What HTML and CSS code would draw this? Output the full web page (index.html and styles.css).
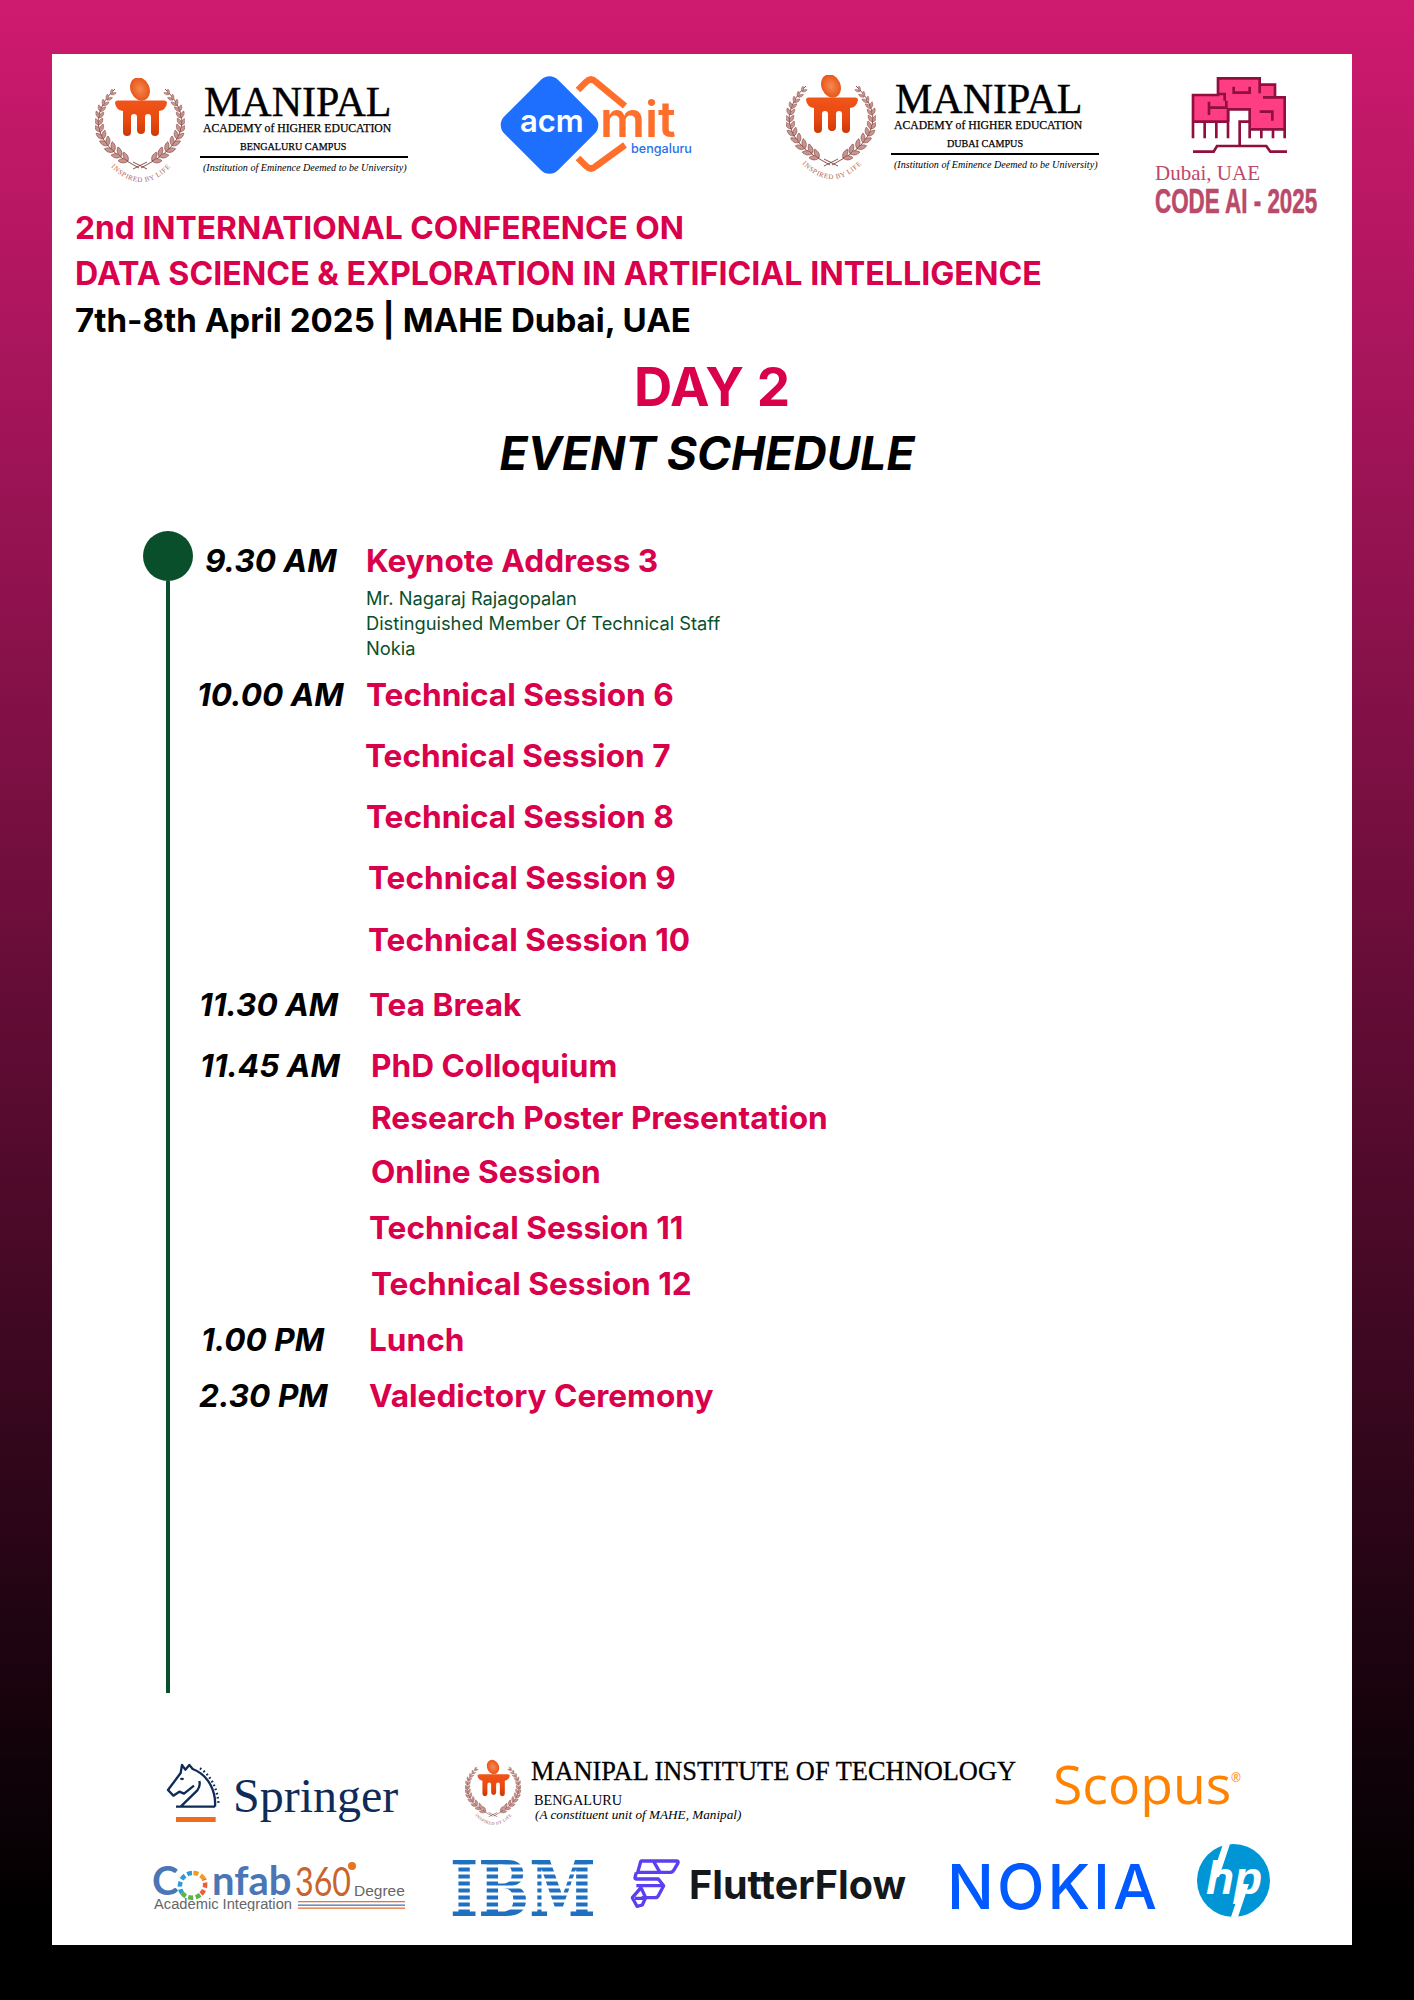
FILE: index.html
```html
<!DOCTYPE html>
<html lang="en">
<head>
<meta charset="utf-8">
<title>CODE AI 2025 - Day 2 Event Schedule</title>
<link rel="stylesheet" href="styles.css">
</head>
<body>
<svg class="defs" aria-hidden="true">
  <defs>
    <linearGradient id="capGrad" x1="0" y1="0" x2="0" y2="1">
      <stop offset="0" stop-color="#f0551a"/>
      <stop offset="0.6" stop-color="#e8480f"/>
      <stop offset="1" stop-color="#c93a06"/>
    </linearGradient>
    <radialGradient id="flameGrad">
      <stop offset="0" stop-color="#f58a52"/>
      <stop offset="1" stop-color="#e8561a"/>
    </radialGradient>
    <path id="lf" d="M0 0C3-3 7-2.600 10 0C7 2.600 3 3 0 0Z" fill="#c8958f" stroke="#7e3f3a" stroke-width=".6"/>
    <g id="branch">
      <path d="M62 97L48 104M54 103L40 95C26 86 15 75 13 58C13 46 20 33 30 24" fill="none" stroke="#7e3f3a" stroke-width=".9"/>
      <use href="#lf" transform="translate(43 96) rotate(-178)"/>
      <use href="#lf" transform="translate(43 96) rotate(-118)"/>
      <use href="#lf" transform="translate(36 91.500) rotate(-172)"/>
      <use href="#lf" transform="translate(36 91.500) rotate(-108)"/>
      <use href="#lf" transform="translate(29 86.500) rotate(-164)"/>
      <use href="#lf" transform="translate(29 86.500) rotate(-100)"/>
      <use href="#lf" transform="translate(23 80.500) rotate(-152) scale(.95)"/>
      <use href="#lf" transform="translate(23 80.500) rotate(-90) scale(.95)"/>
      <use href="#lf" transform="translate(18 74) rotate(-140) scale(.9)"/>
      <use href="#lf" transform="translate(18 74) rotate(-78) scale(.9)"/>
      <use href="#lf" transform="translate(15 67) rotate(-130) scale(.85)"/>
      <use href="#lf" transform="translate(15 67) rotate(-68) scale(.85)"/>
      <use href="#lf" transform="translate(13.500 60) rotate(-122) scale(.8)"/>
      <use href="#lf" transform="translate(13.500 60) rotate(-58) scale(.8)"/>
      <use href="#lf" transform="translate(14 53) rotate(-112) scale(.75)"/>
      <use href="#lf" transform="translate(14 53) rotate(-50) scale(.75)"/>
      <use href="#lf" transform="translate(15.500 46.500) rotate(-104) scale(.7)"/>
      <use href="#lf" transform="translate(15.500 46.500) rotate(-42) scale(.7)"/>
      <use href="#lf" transform="translate(18.500 40.500) rotate(-94) scale(.65)"/>
      <use href="#lf" transform="translate(18.500 40.500) rotate(-32) scale(.65)"/>
      <use href="#lf" transform="translate(22 35) rotate(-86) scale(.6)"/>
      <use href="#lf" transform="translate(22 35) rotate(-24) scale(.6)"/>
      <use href="#lf" transform="translate(26 29.500) rotate(-78) scale(.55)"/>
      <use href="#lf" transform="translate(26 29.500) rotate(-18) scale(.55)"/>
    </g>
    <path id="arc" d="M20 95Q56 139 92 95"/>
    <symbol id="emblem" viewBox="10 13 90 104">
      <use href="#branch"/>
      <use href="#branch" transform="matrix(-1 0 0 1 110 0)"/>
      <ellipse cx="55" cy="24" rx="9.500" ry="12" transform="rotate(-24 55 24)" fill="url(#flameGrad)"/>
      <path fill="url(#capGrad)" d="M30 38Q30 35.500 33 35.500H79Q82 35.500 82 38Q81 45 74 46V67a4 4 0 0 1-8 0V52Q66 49 63 49Q60 49 60 52V65a4 4 0 0 1-8 0V52Q52 49 49 49Q46 49 46 52V67a4 4 0 0 1-8 0V46Q31 45 30 38Z"/>
      <text class="em-motto"><textPath href="#arc" startOffset="50%" text-anchor="middle">INSPIRED BY LIFE</textPath></text>
    </symbol>
  </defs>
</svg>

<main class="panel">
  <header class="header">
    <div class="mahe mahe-a">
      <svg class="emblem"><use href="#emblem"/></svg>
      <div class="mahe-text">
        <div class="mahe-name">MANIPAL</div>
        <div class="mahe-acad">ACADEMY of HIGHER EDUCATION</div>
        <div class="mahe-campus">BENGALURU CAMPUS</div>
        <div class="mahe-note">(Institution of Eminence Deemed to be University)</div>
      </div>
    </div>

    <svg class="acm" viewBox="0 0 200 110" role="img" aria-label="ACM MIT Bengaluru">
      <rect x="14.500" y="17" width="76" height="76" rx="12" transform="rotate(45 52.500 55)" fill="#1f6fff"/>
      <text class="acm-t" x="23" y="62">acm</text>
      <path d="M81 20L89 12Q94 7 99 12L128 36" fill="none" stroke="#ff6f2c" stroke-width="6.500"/>
      <path d="M81 88L89 96Q94 101 99 96L128 75" fill="none" stroke="#ff6f2c" stroke-width="6.500"/>
      <text class="mit-t" x="103" y="67">mit</text>
      <text class="blr-t" x="134" y="83">bengaluru</text>
    </svg>

    <div class="mahe mahe-b">
      <svg class="emblem"><use href="#emblem"/></svg>
      <div class="mahe-text">
        <div class="mahe-name">MANIPAL</div>
        <div class="mahe-acad">ACADEMY of HIGHER EDUCATION</div>
        <div class="mahe-campus mahe-campus-b">DUBAI CAMPUS</div>
        <div class="mahe-note">(Institution of Eminence Deemed to be University)</div>
      </div>
    </div>

    <div class="code">
      <svg class="tree" viewBox="0 0 345 270" aria-hidden="true">
        <path d="M105 25H230V44H276V82H305V178H200V118H140V155H30V75H105Z" fill="#ff3d82"/>
        <path d="M30 205V75H105V25H230V44H276V82H305V205M65 155V205M100 155V205M135 155V205M30 155H135V118H200V205M235 178V205M270 178V205M200 178H305M152 50V68H200V50M78 95V135M78 113H130V92M105 72H125V92M230 44V70M276 82H240M230 125H268V152M170 232V155H200M30 245H92L102 228H250L262 245H312" fill="none" stroke="#8f0f3e" stroke-width="8"/>
      </svg>
      <div class="code-place">Dubai, UAE</div>
      <div class="code-name">CODE AI - 2025</div>
    </div>
  </header>

  <section class="titles">
    <h1 class="conf">2nd INTERNATIONAL CONFERENCE ON</h1>
    <h1 class="conf conf-long">DATA SCIENCE &amp; EXPLORATION IN ARTIFICIAL INTELLIGENCE</h1>
    <p class="when">7th-8th April 2025 | MAHE Dubai, UAE</p>
    <h2 class="day">DAY 2</h2>
    <h2 class="event">EVENT SCHEDULE</h2>
  </section>

  <section class="schedule">
    <div class="axis"><span class="axis-dot"></span><span class="axis-line"></span></div>
    <div class="rows">
      <div class="row"><span class="time t-930">9.30 AM</span><span class="item">Keynote Address 3</span></div>
      <div class="speaker">
        <div>Mr. Nagaraj Rajagopalan</div>
        <div>Distinguished Member Of Technical Staff</div>
        <div>Nokia</div>
      </div>
      <div class="row g14"><span class="time t-1000">10.00 AM</span><span class="item">Technical Session 6</span></div>
      <div class="row g21"><span class="time"></span><span class="item n-1">Technical Session 7</span></div>
      <div class="row g21"><span class="time"></span><span class="item">Technical Session 8</span></div>
      <div class="row g21"><span class="time"></span><span class="item n2">Technical Session 9</span></div>
      <div class="row g22"><span class="time"></span><span class="item n2">Technical Session 10</span></div>
      <div class="row g25"><span class="time t-1130">11.30 AM</span><span class="item n3">Tea Break</span></div>
      <div class="row g21"><span class="time t-1145">11.45 AM</span><span class="item n4">PhD Colloquium</span></div>
      <div class="row g12"><span class="time"></span><span class="item n4">Research Poster Presentation</span></div>
      <div class="row g14"><span class="time"></span><span class="item n4">Online Session</span></div>
      <div class="row g16"><span class="time"></span><span class="item n3">Technical Session 11</span></div>
      <div class="row g16"><span class="time"></span><span class="item n4">Technical Session 12</span></div>
      <div class="row g16"><span class="time t-100">1.00 PM</span><span class="item n3">Lunch</span></div>
      <div class="row g16"><span class="time t-230">2.30 PM</span><span class="item n3">Valedictory Ceremony</span></div>
    </div>
  </section>

  <footer class="sponsors">
    <div class="sp-row sp-row-a">
      <div class="springer">
        <svg class="knight" viewBox="0 0 195 210" aria-hidden="true">
          <path d="M62 155L112 106Q122 92 118 78M48 155H165M165 155C168 115 150 62 98 42L88 30L76 44L66 30L62 54L24 105L40 122L58 110L72 116L102 92" fill="none" stroke="#0f2c58" stroke-width="7" stroke-linejoin="round"/>
          <path d="M120 40C150 60 172 95 176 150" fill="none" stroke="#0f2c58" stroke-width="7" stroke-dasharray="5 8"/>
          <ellipse cx="66" cy="72" rx="6" ry="3.500" fill="#0f2c58"/>
          <rect x="48" y="186" width="119" height="15" fill="#f26a1b"/>
        </svg>
        <span class="springer-t">Springer</span>
      </div>
      <div class="mit">
        <svg class="emblem-sm"><use href="#emblem"/></svg>
        <div class="mit-text">
          <div class="mit-name">MANIPAL INSTITUTE OF TECHNOLOGY</div>
          <div class="mit-city">BENGALURU</div>
          <div class="mit-note">(A constituent unit of MAHE, Manipal)</div>
        </div>
      </div>
      <div class="scopus">Scopus<span class="scopus-r">®</span></div>
    </div>

    <div class="sp-row sp-row-b">
      <svg class="confab" viewBox="0 0 253 50" role="img" aria-label="Confab 360 Degree Academic Integration">
        <text class="cf-c" x="0" y="34">C</text>
        <g fill="none" stroke-width="4.500" stroke-dasharray="5 2.500">
          <path d="M40 12A13 13 0 0 0 30 32" stroke="#2f9ad8"/>
          <path d="M30 32A13 13 0 0 0 49 33" stroke="#5cb646"/>
          <path d="M49 33A13 13 0 0 0 52 18" stroke="#ef5d38"/>
          <path d="M52 18A13 13 0 0 0 40 12" stroke="#f39a22"/>
        </g>
        <text class="cf-blue" x="60" y="34">nfab</text>
        <text class="cf-360" x="143" y="35" textLength="56" lengthAdjust="spacingAndGlyphs">360</text>
        <circle cx="200" cy="5" r="4" fill="#e8741e"/>
        <text class="cf-deg" x="202" y="35">Degree</text>
        <text class="cf-ac" x="2" y="48">Academic Integration</text>
        <rect x="146" y="40" width="107" height="1.300" fill="#e8743a"/>
        <rect x="146" y="43.500" width="107" height="1.300" fill="#4a76b5"/>
        <rect x="146" y="46.500" width="107" height="1.300" fill="#e8743a"/>
      </svg>

      <svg class="ibm" viewBox="0 0 141 56" role="img" aria-label="IBM">
        <text class="ibm-t" x="-2" y="56" textLength="146" lengthAdjust="spacingAndGlyphs">IBM</text>
        <g fill="#fff">
          <rect y="4.500" width="141" height="3"/><rect y="11.500" width="141" height="3"/>
          <rect y="18.500" width="141" height="3"/><rect y="25.500" width="141" height="3"/>
          <rect y="32.500" width="141" height="3"/><rect y="39.500" width="141" height="3"/>
          <rect y="46.500" width="141" height="3"/>
        </g>
      </svg>

      <div class="flutter">
        <svg class="ff-icon" viewBox="0 0 180 180" aria-hidden="true">
          <path d="M50 18H155Q162 18 158 26L146 46Q143 52 136 52H38L46 24Q47 18 50 18ZM85 18L105 52M34 52L30 68Q30 72 36 72H100L116 92L100 122Q97 128 90 128H50M34 92H114M48 98L22 128L36 154L52 150L62 128L48 98M30 130H58" fill="none" stroke="#5b3ff0" stroke-width="10" stroke-linejoin="round"/>
        </svg>
        <span class="ff-t">FlutterFlow</span>
      </div>

      <span class="nokia">NOKIA</span>

      <svg class="hp" viewBox="0 0 73 73" role="img" aria-label="HP">
        <circle cx="36.500" cy="36.500" r="36.500" fill="#0096d6"/>
        <text class="hp-t" x="9" y="50">hp</text>
        <polygon points="26,0 33,0 22,33 15,33" fill="#fff"/>
        <polygon points="45,40 52,40 41,73 34,73" fill="#fff"/>
      </svg>
    </div>
  </footer>
</main>
</body>
</html>
```

FILE: styles.css
```css
* { box-sizing: border-box; }

html, body { margin: 0; padding: 0; }

body {
  height: 2000px;
  padding: 54px 62px 55px 52px;
  background: linear-gradient(180deg, #cf1a70 0%, #000 96%);
  font-family: Inter, "Liberation Sans", sans-serif;
}

.defs { position: absolute; width: 0; height: 0; }

.panel {
  display: flex;
  flex-direction: column;
  width: 1300px;
  height: 1891px;
  background: #fff;
}

/* Header logos */
.header {
  display: flex;
  align-items: flex-start;
  height: 151px;
  padding-left: 43px;
}

.mahe { display: flex; align-items: flex-start; width: 313px; }
.mahe-a { margin-top: 24px; }
.mahe-b { margin-top: 21px; margin-left: 89px; }

.emblem { width: 90px; height: 104px; flex: none; }

.mahe-text {
  width: 208px;
  margin-left: 15px;
  font-family: "Liberation Serif", serif;
  color: #000;
}

.mahe-name {
  margin-top: 4px;
  padding-left: 4px;
  font-size: 42px;
  line-height: 40px;
  white-space: nowrap;
  -webkit-text-stroke: .4px #000;
}

.mahe-acad {
  padding-left: 3px;
  font-size: 11.7px;
  line-height: 14px;
  white-space: nowrap;
  -webkit-text-stroke: .25px #000;
}

.mahe-campus {
  margin-top: 3px;
  padding-left: 40px;
  padding-bottom: 1px;
  border-bottom: 2px solid #000;
  font-size: 10.1px;
  line-height: 16px;
  white-space: nowrap;
  -webkit-text-stroke: .25px #000;
}

.mahe-campus-b { padding-left: 56px; }

.mahe-note {
  padding-left: 3px;
  margin-top: 3px;
  font-size: 10.1px;
  font-style: italic;
  line-height: 14px;
  white-space: nowrap;
}

.acm { width: 200px; height: 110px; flex: none; margin-left: 89px; margin-top: 16px; }
.acm-t { font: 600 31px Inter, sans-serif; fill: #fff; }
.mit-t { font: 600 50px Inter, sans-serif; fill: #ff6f2c; }
.blr-t { font: 500 12.600px Inter, sans-serif; fill: #2a6fe8; }

.code { width: 170px; margin-left: 56px; margin-top: 16px; }
.tree { display: block; width: 115px; height: 90px; margin-left: 28px; }
.code-place {
  margin-top: 1px;
  font-family: "Liberation Serif", serif;
  font-size: 21px;
  line-height: 24px;
  color: #c0476a;
}
.code-name {
  margin-top: 1px;
  font-family: "Liberation Sans", sans-serif;
  font-size: 35px;
  font-weight: 700;
  line-height: 30px;
  color: #b94a6a;
  white-space: nowrap;
  transform: scaleX(.64);
  transform-origin: left center;
  -webkit-text-stroke: .6px #b94a6a;
}

/* Titles */
.titles { padding-left: 23px; }

.conf, .when {
  margin: 0;
  font-size: 31.8px;
  font-weight: 650;
  line-height: 46px;
  color: #d9004c;
}

.conf-long { font-size: 32.2px; }

.when { font-size: 33.1px; font-weight: 700; color: #000; }

.day, .event {
  margin: 0;
  text-align: center;
}

.day {
  padding-right: 3px;
  margin-top: 15px;
  font-size: 53px;
  font-weight: 700;
  line-height: 58px;
  color: #d9004c;
}

.event {
  padding-right: 13px;
  margin-top: 9px;
  font-size: 46px;
  font-weight: 700;
  font-style: italic;
  line-height: 56px;
  color: #000;
}

/* Schedule */
.schedule {
  display: flex;
  height: 1162px;
  margin-top: 50px;
  margin-left: 91px;
}

.axis {
  display: flex;
  flex-direction: column;
  align-items: center;
  width: 50px;
  flex: none;
}

.axis-dot {
  width: 50px;
  height: 50px;
  border-radius: 50%;
  background: #0a4f2b;
  flex: none;
}

.axis-line { width: 4px; flex: 1; background: #0a4f2b; }

.rows { padding-top: 10px; }

.row { display: flex; height: 40px; align-items: center; }

.time {
  width: 173px;
  flex: none;
  font-size: 31.6px;
  font-weight: 700;
  font-style: italic;
  line-height: 40px;
  color: #000;
  white-space: nowrap;
}

.t-930 { padding-left: 12px; }
.t-1000 { padding-left: 4px; }
.t-1130 { padding-left: 6px; }
.t-1145 { padding-left: 7px; }
.t-100 { padding-left: 8px; }
.t-230 { padding-left: 6px; }

.item {
  font-size: 31.6px;
  font-weight: 650;
  line-height: 40px;
  color: #d9004c;
  white-space: nowrap;
}

.n-1 { margin-left: -1px; }
.n2 { margin-left: 2px; }
.n3 { margin-left: 3px; }
.n4 { margin-left: 5px; }

.g12 { margin-top: 12px; }
.g14 { margin-top: 14px; }
.g16 { margin-top: 16px; }
.g21 { margin-top: 21px; }
.g22 { margin-top: 22px; }
.g25 { margin-top: 25px; }

.speaker {
  margin-top: 5px;
  padding-left: 173px;
  font-size: 18.3px;
  line-height: 25px;
  color: #0a4f2b;
}

/* Sponsors */
.sponsors { margin-top: 65px; }

.sp-row { display: flex; align-items: flex-start; }
.sp-row-a { height: 86px; padding-left: 108px; }
.sp-row-b { height: 73px; padding-left: 100px; }

.springer { display: flex; align-items: flex-start; width: 305px; margin-top: -3px; }
.knight { width: 65px; height: 70px; flex: none; }
.springer-t {
  margin-left: 8px;
  margin-top: 14px;
  font-family: "Liberation Serif", serif;
  font-size: 48px;
  line-height: 54px;
  color: #0f2c58;
}

.mit { display: flex; align-items: flex-start; width: 588px; }
.emblem-sm { width: 56px; height: 69px; flex: none; }
.mit-text { margin-left: 10px; font-family: "Liberation Serif", serif; color: #000; }
.mit-name { font-size: 26.4px; line-height: 26px; white-space: nowrap; -webkit-text-stroke: .3px #000; }
.mit-city { padding-left: 3px; margin-top: 8px; font-size: 14.3px; line-height: 16px; }
.mit-note { padding-left: 4px; margin-top: -1px; font-size: 13.2px; font-style: italic; line-height: 16px; }

.scopus {
  position: relative;
  margin-top: -10px;
  font-family: "Open Sans", sans-serif;
  font-size: 53.5px;
  font-weight: 500;
  line-height: 72px;
  color: #ff8200;
}

.scopus-r { position: absolute; left: 178px; top: -6px; font-size: 12px; }

.confab { width: 253px; height: 50px; flex: none; margin-top: 17px; }
.cf-c { font: 700 40px Lato, sans-serif; fill: #4a76b5; }
.cf-blue { font: 700 40px Lato, sans-serif; fill: #4a76b5; }
.cf-360 { font: 400 40px Lato, sans-serif; fill: #c8642c; }
.cf-deg { font: 400 15.500px "Liberation Sans", sans-serif; fill: #666; }
.cf-ac { font: 400 14.700px "Liberation Sans", sans-serif; fill: #666; }

.ibm { width: 141px; height: 56px; flex: none; margin-top: 16px; margin-left: 47px; }
.ibm-t { font: 700 77px "DejaVu Serif", serif; fill: #1f70c1; }

.flutter { display: flex; align-items: flex-start; width: 322px; margin-left: 32px; margin-top: 11px; flex: none; }
.ff-icon { width: 60px; height: 60px; flex: none; }
.ff-t {
  margin-left: 4px;
  margin-top: 8px;
  font-size: 39.500px;
  font-weight: 700;
  line-height: 44px;
  color: #14181b;
}

.nokia {
  width: 250px;
  flex: none;
  margin-top: 8px;
  font-size: 62px;
  font-weight: 500;
  line-height: 70px;
  letter-spacing: 3px;
  color: #005aff;
}

.hp { width: 73px; height: 73px; flex: none; }
.hp-t { font: italic 700 46px "Liberation Sans", sans-serif; fill: #fff; }
.em-motto { font: 7px "Liberation Serif", serif; fill: #a8625c; letter-spacing: .6px; }
```
